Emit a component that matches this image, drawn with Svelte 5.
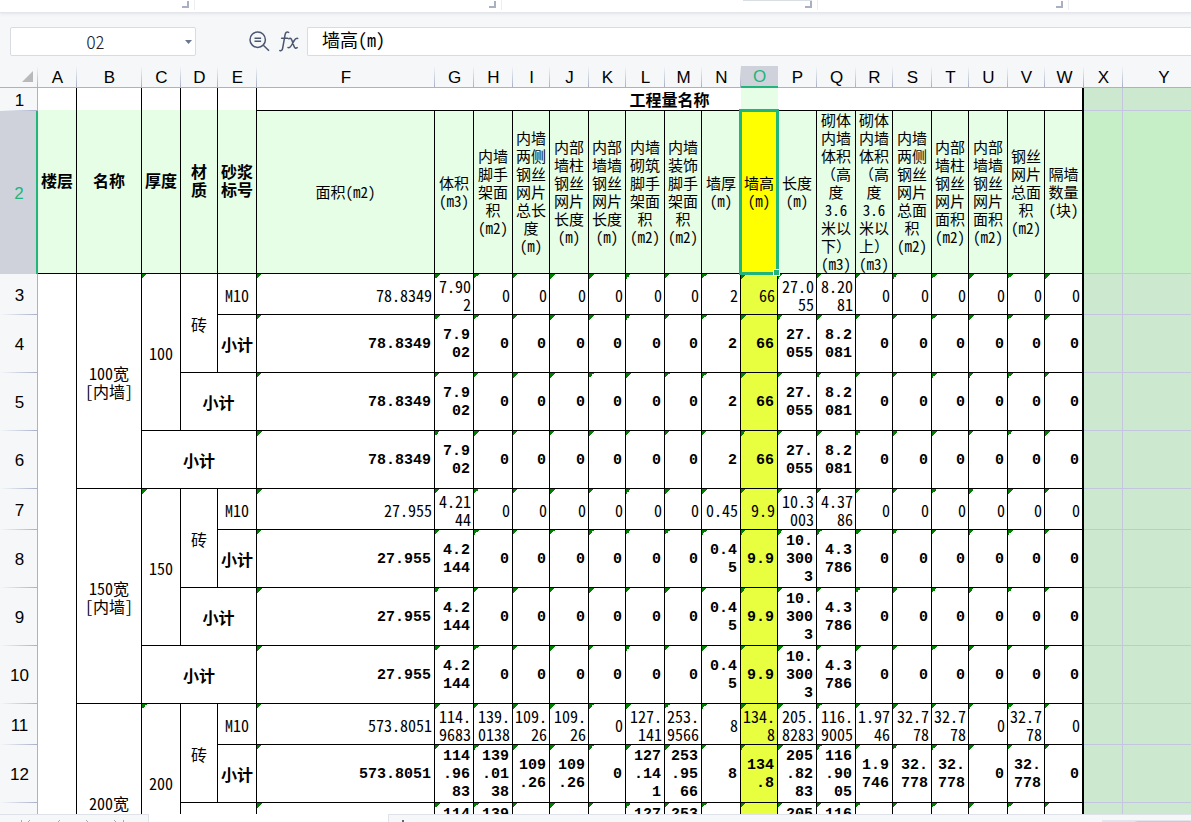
<script>
  const columns = [
    ['A', 39], ['B', 65], ['C', 39], ['D', 37], ['E', 39], ['F', 178],
    ['G', 39], ['H', 39], ['I', 37], ['J', 39], ['K', 37], ['L', 39],
    ['M', 37], ['N', 39], ['O', 37], ['P', 39], ['Q', 39], ['R', 37],
    ['S', 39], ['T', 37], ['U', 39], ['V', 37], ['W', 39], ['X', 39], ['Y', 82]
  ];
  const active = 'O';

  const keyHeads = ['楼层', '名称', '厚度', '材\n质', '砂浆\n标号'];
  const heads = [
    '面积(m2)',
    '体积\n(m3)',
    '内墙\n脚手\n架面\n积\n(m2)',
    '内墙\n两侧\n钢丝\n网片\n总长\n度\n(m)',
    '内部\n墙柱\n钢丝\n网片\n长度\n(m)',
    '内部\n墙墙\n钢丝\n网片\n长度\n(m)',
    '内墙\n砌筑\n脚手\n架面\n积\n(m2)',
    '内墙\n装饰\n脚手\n架面\n积\n(m2)',
    '墙厚\n(m)',
    '墙高\n(m)',
    '长度\n(m)',
    '砌体\n内墙\n体积\n（高\n度\n3.6\n米以\n下）\n(m3)',
    '砌体\n内墙\n体积\n（高\n度\n3.6\n米以\n上）\n(m3)',
    '内墙\n两侧\n钢丝\n网片\n总面\n积\n(m2)',
    '内部\n墙柱\n钢丝\n网片\n面积\n(m2)',
    '内部\n墙墙\n钢丝\n网片\n面积\n(m2)',
    '钢丝\n网片\n总面\n积\n(m2)',
    '隔墙\n数量\n(块)'
  ];

  const groups = [
    { name: '100宽\n[内墙]', size: '100', values: ['78.8349', '7.902', '0', '0', '0', '0', '0', '0', '2', '66', '27.055', '8.2081', '0', '0', '0', '0', '0', '0'] },
    { name: '150宽\n[内墙]', size: '150', values: ['27.955', '4.2144', '0', '0', '0', '0', '0', '0', '0.45', '9.9', '10.3003', '4.3786', '0', '0', '0', '0', '0', '0'] },
    { name: '200宽\n[内墙]', size: '200', values: ['573.8051', '114.9683', '139.0138', '109.26', '109.26', '0', '127.141', '253.9566', '8', '134.8', '205.8283', '116.9005', '1.9746', '32.778', '32.778', '0', '32.778', '0'] }
  ];
  const totalRows = groups.length * 4;
  const launchers = [189, 307, 316, 251];
</script>

{#snippet numbers(values)}
  {#each values as v, i}
    <td class="num flag" class:hot={i === 9} class:edge={i === 17}>{v}</td>
  {/each}
  <td class="out"></td><td class="out"></td><td class="out"></td>
{/snippet}

<div class="app">
  <div class="ribbon">
    {#each launchers as w, i}
      <div class="group" class:gallery={i === 2} style:width="{w + (i === 0 ? 6 : 0)}px">
        <svg width="7" height="7" viewBox="0 0 7 7" aria-hidden="true"><path d="M6 0v6H0" fill="none" stroke="#a9b0c3" stroke-width="2" /></svg>
      </div>
    {/each}
  </div>

  <div class="formula">
    <div class="namebox">
      <input type="text" value="O2" aria-label="名称框" />
      <button aria-label="展开名称列表">
        <svg width="7" height="4" viewBox="0 0 7 4"><path d="M0 0h7L3.5 4z" fill="#6b7690" /></svg>
      </button>
    </div>
    <div class="tools">
      <button aria-label="查找">
        <svg width="21" height="21" viewBox="0 0 21 21" fill="none" stroke="#4d5670" stroke-width="1.5">
          <circle cx="8.7" cy="8.7" r="7.7" />
          <path d="M14.3 14.3l5.7 5.4M5.5 7.2h6.6M5.5 10.3h6.6" />
        </svg>
      </button>
      <button aria-label="插入函数">
        <svg width="20" height="21" viewBox="0 0 20 21" fill="none" stroke="#4d5670" stroke-width="1.5" stroke-linecap="round">
          <path d="M9.6 1.4C7.6.5 6.500 1.600 6.100 3.600L3.700 17C3.300 19.200 2.300 20.100.8 19.500M2.600 7.200h6.200" />
          <path d="M9.800 7.800c1.600-1 2.500-.4 3.200 1.700l1.900 5.600c.7 2.100 1.700 2.600 3.300 1.500M18.700 7.400c-1.700-.4-2.700.7-3.800 2.600l-2.200 4c-1.100 2-2 3-3.700 2.600" />
        </svg>
      </button>
    </div>
    <input class="fx" type="text" value="墙高(m)" aria-label="编辑栏" />
  </div>

  <div class="sheet">
    <table>
      <colgroup>
        <col style:width="38px" />
        {#each columns as [, w]}<col style:width="{w}px" />{/each}
        <col />
      </colgroup>
      <thead>
        <tr class="letters">
          <th class="corner"><svg width="11" height="11" viewBox="0 0 11 11" aria-hidden="true"><path d="M11 0v11H0z" fill="#b9b9b9" /></svg></th>
          {#each columns as [c]}<th class:active={c === active}>{c}</th>{/each}
          <th></th>
        </tr>
      </thead>
      <tbody>
        <tr class="r1">
          <th class="rh">1</th>
          {#each keyHeads as k}<td class="key" rowspan="2">{k}</td>{/each}
          <td class="title edge" colspan="18">工程量名称</td>
          <td class="out"></td><td class="out"></td><td class="out"></td>
        </tr>
        <tr class="r2">
          <th class="rh active">2</th>
          {#each heads as h, i}
            <td class="head" class:selected={i === 9} class:edge={i === 17}>{#each h.split(/([（）])/) as part}{#if part === '（' || part === '）'}<span class="full">{part}</span>{:else}{part}{/if}{/each}{#if i === 9}<span class="frame"><i></i></span>{/if}</td>
          {/each}
          <td class="out lit"></td><td class="out lit"></td><td class="out lit"></td>
        </tr>
        {#each groups as g, n}
          <tr class="plain">
            <th class="rh">{n * 4 + 3}</th>
            {#if n === 0}<td rowspan={totalRows}></td>{/if}
            <td rowspan="4">{g.name}</td>
            <td class="flag" rowspan="3">{g.size}</td>
            <td rowspan="2">砖</td>
            <td>M10</td>
            {@render numbers(g.values)}
          </tr>
          <tr class="total">
            <th class="rh">{n * 4 + 4}</th>
            <td class="sub">小计</td>
            {@render numbers(g.values)}
          </tr>
          <tr class="total">
            <th class="rh">{n * 4 + 5}</th>
            <td class="sub" colspan="2">小计</td>
            {@render numbers(g.values)}
          </tr>
          <tr class="total">
            <th class="rh">{n * 4 + 6}</th>
            <td class="sub" colspan="3">小计</td>
            {@render numbers(g.values)}
          </tr>
        {/each}
      </tbody>
    </table>
  </div>

  <div class="tabs">
    <div class="nav">
      <svg width="104" height="6" viewBox="0 0 104 6" fill="none" stroke="#a4a9b5" aria-hidden="true">
        <path d="M1.500 2v4M10 2L6 6M40 2l-4 4M66 2l4 4M94 2l4 4M103.500 2v4" />
      </svg>
    </div>
    <div class="tab"></div>
    <div class="rest">
      <svg width="2" height="3" viewBox="0 0 2 3" aria-hidden="true"><path d="M1 0v3" stroke="#5d657a" stroke-width="2" /></svg>
      <div class="scroll"><div class="thumb"></div></div>
    </div>
  </div>
</div>

<style>
  :global(body) { margin: 0; overflow: hidden; }
  .app {
    display: flex; flex-direction: column; height: 100vh; overflow: hidden;
    background: #f5f7f9; color: #000;
    font: 400 16px/18px "Noto Sans CJK SC", sans-serif;
    font-feature-settings: "hwid";
  }
  input, button { font: inherit; font-feature-settings: inherit; border: 0; padding: 0; margin: 0; background: none; outline: 0; }
  svg { display: block; }

  .ribbon { display: flex; height: 12px; background: #fff; border-bottom: 1px solid #e3e5e9; box-shadow: 0 1px 3px #e3e5e9; }
  .group { box-sizing: border-box; height: 10px; border-right: 1px solid #eceef1; padding: 1px 5px 0 0; display: flex; justify-content: flex-end; }
  .gallery { background: linear-gradient(#d9dde4, #d9dde4) right 5px top / 69px 1px no-repeat; }

  .formula { display: flex; align-items: center; padding: 14px 0 10px 10px; }
  .namebox { box-sizing: border-box; width: 186px; height: 29px; display: flex; align-items: center; background: #fff; border: 1px solid #d8dbe2; border-radius: 2px; }
  .namebox input { flex: 1; min-width: 0; text-align: center; font-size: 18px; font-weight: 300; color: #222; padding: 0 2px 2px 0; }
  .namebox button { width: 13px; display: flex; justify-content: center; }
  .tools { flex: 0 0 111px; box-sizing: border-box; display: flex; gap: 9px; padding: 0 8px 0 53px; }
  .fx { flex: 1; min-width: 0; box-sizing: border-box; height: 29px; background: #fff; border: 1px solid #d8dbe2; border-right: 0; border-radius: 2px 0 0 2px; padding: 0 0 6px 14px; font-size: 18px; font-weight: 400; }

  .sheet { flex: 1; min-height: 0; overflow: hidden; }
  table { table-layout: fixed; width: 100%; border-collapse: separate; border-spacing: 0; }
  th, td { box-sizing: border-box; font-weight: inherit; vertical-align: middle; text-align: center; }
  td { position: relative; background-color: #fff; border-right: 1px solid #000; border-bottom: 1px solid #000; padding: 2px 2px 0; white-space: pre-line; }
  th { padding: 2px 0 0 2px; font: 17px/18px "Liberation Sans", sans-serif; }

  .letters th {
    height: 22px; padding-left: 0; border-bottom: 1px solid #aab1c9;
    background: linear-gradient(#f5f7f9, #aab1c9) right / 1px 100% no-repeat;
  }
  .letters .corner { padding: 0; }
  .corner svg { margin-left: 22px; }
  .letters .active { background: #cfd2da; color: #21b57b; border-bottom: 2px solid #21b57b; }

  .rh { border-right: 1px solid #aab1c9; background: linear-gradient(90deg, #f5f7f9, #aab1c9) bottom / 100% 1px no-repeat; }
  .rh.active { background: #cfd2da; color: #21b57b; border-right: 2px solid #21b57b; }

  .r1 { height: 23px; }
  .r2 { height: 163px; }
  .plain { height: 41px; }
  .total { height: 58px; }

  .key { font-weight: 700; padding: 0 2px 2px; background: linear-gradient(#fff 22px, #e6fde6 22px); }
  .title { font-weight: 700; padding: 0; background: linear-gradient(#e6fde6, #e6fde6) 484px 0 / 37px 100% no-repeat #fff; }
  .head { background-color: #e6fde6; font-size: 15px; padding-top: 0; }
  .full { font-feature-settings: normal; }
  .selected { background-color: #ff0; }
  .frame { position: absolute; inset: -2px; border: 3px solid #21b57b; z-index: 1; }
  .frame i { position: absolute; right: -4px; bottom: -4px; width: 5px; height: 5px; background: #21b57b; border: 1px solid #fff; }

  .flag { background-image: linear-gradient(135deg, #008000 50%, transparent 50%); background-size: 5px 5px; background-repeat: no-repeat; }
  .num { text-align: right; line-break: anywhere; }
  .hot { background-color: #e8ff3f; }
  .sub { font-weight: 700; padding-top: 0; }
  .total .num { font-family: "Liberation Mono", monospace; font-size: 15px; font-weight: 700; padding: 3px 3px 0 2px; }
  .edge { border-right-width: 2px; }
  .out { background-color: #cce8cf; border-color: #c3c6de; padding: 0; }
  .lit { background-color: #c6efc8; }

  .tabs { flex: 0 0 8px; display: flex; overflow: hidden; }
  .nav { flex: 0 0 148px; border-top: 1px solid #dfe2e8; box-sizing: border-box; padding: 3px 0 0 20px; }
  .tab { flex: 0 0 239px; background: #fff; border: solid #dfe2e8; border-width: 0 1px; }
  .rest { flex: 1; border-top: 1px solid #dfe2e8; display: flex; justify-content: space-between; padding: 5px 0 0 13px; }
  .scroll { width: 89px; background: #e3e5ec; padding: 1px 0 0 30px; box-sizing: border-box; }
  .thumb { height: 8px; background: #fff; border: 1px solid #c8cbd4; border-radius: 6px 0 0 0; }
</style>
